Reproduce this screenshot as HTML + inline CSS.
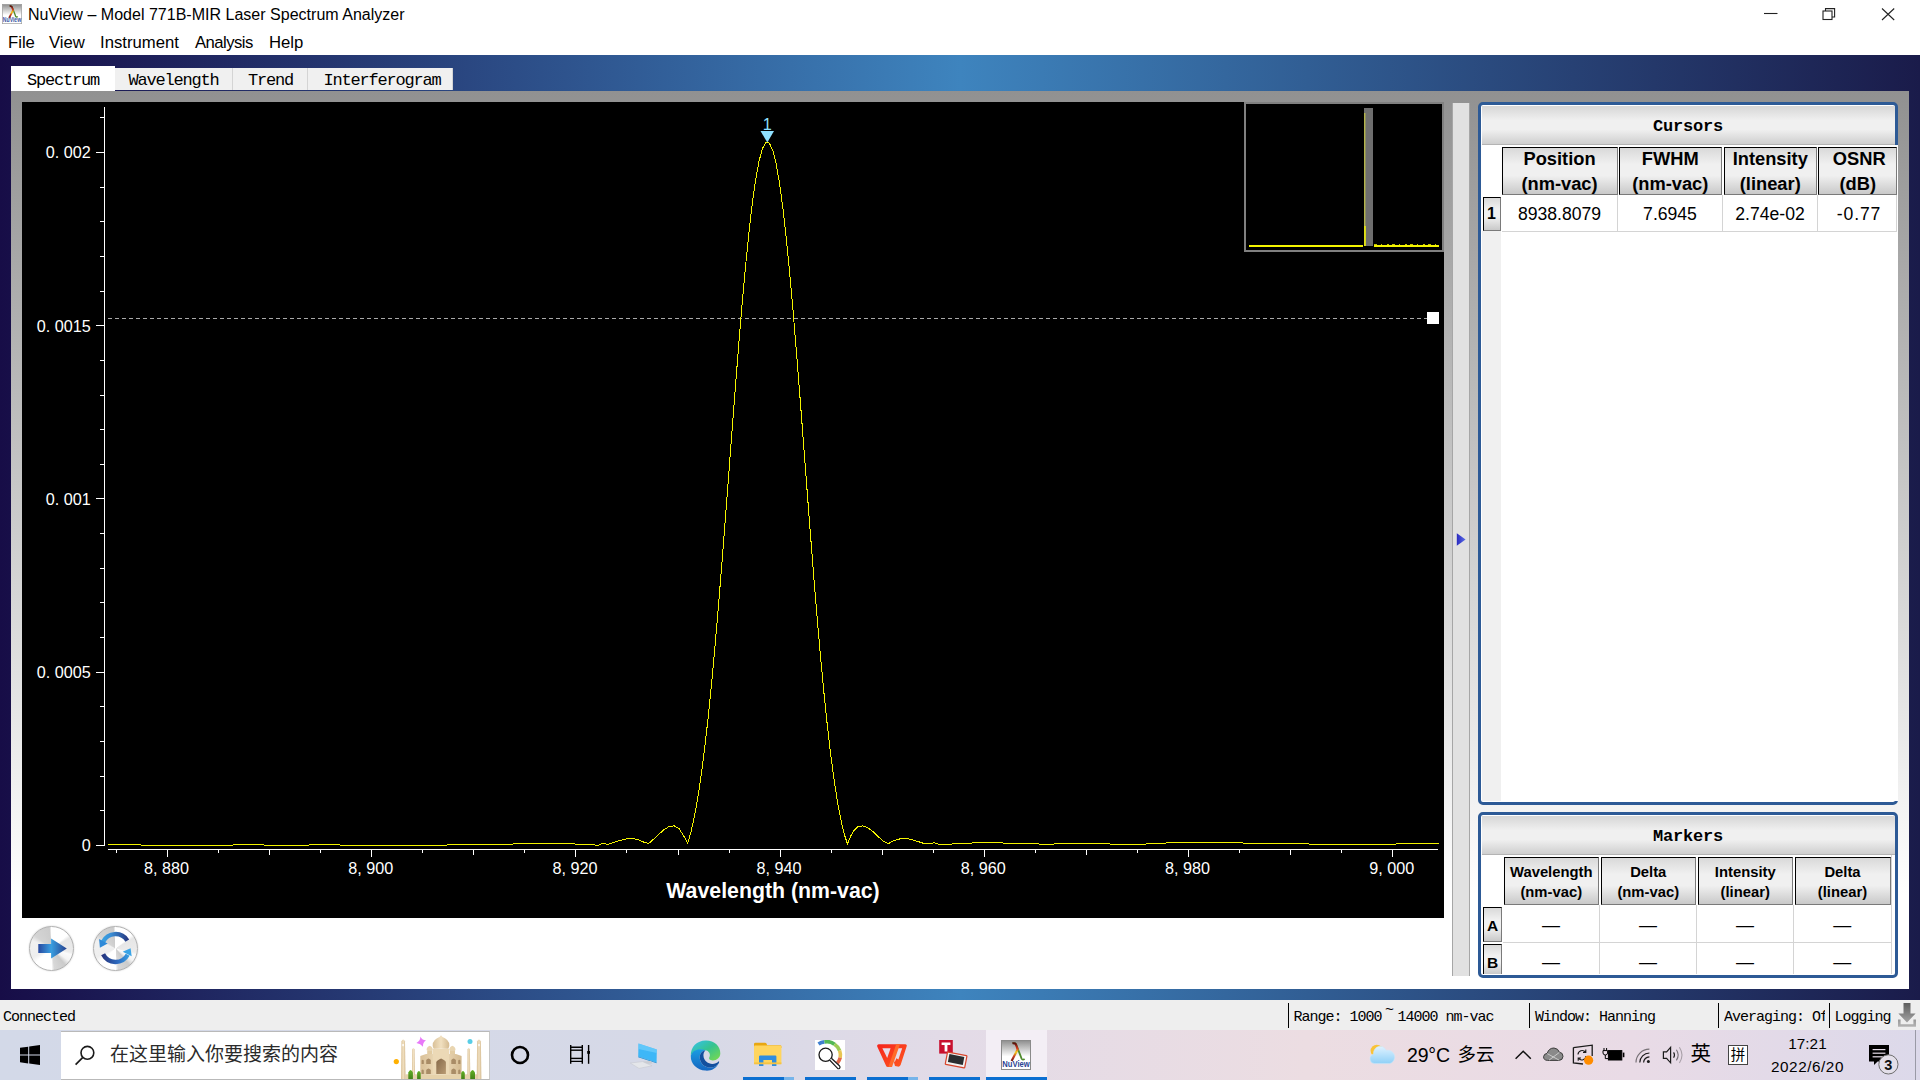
<!DOCTYPE html>
<html lang="zh-CN">
<head>
<meta charset="utf-8">
<title>NuView – Model 771B-MIR Laser Spectrum Analyzer</title>
<style>
html,body{margin:0;padding:0;width:1920px;height:1080px;overflow:hidden;background:#fff;}
body{position:relative;font-family:"Liberation Sans","Noto Sans CJK SC",sans-serif;color:#000;}
.abs{position:absolute;}
.mono{font-family:"Liberation Mono","Noto Sans CJK SC",monospace;}
.sans{font-family:"Liberation Sans","Noto Sans CJK SC",sans-serif;}
/* title + menu */
#titlebar{left:0;top:0;width:1920px;height:30px;background:#fff;}
#title{left:28px;top:4px;font-size:16.05px;line-height:20px;white-space:nowrap;}
#menubar{left:0;top:30px;width:1920px;height:25px;background:#fff;}
.mi{top:33px;font-size:16.7px;line-height:20px;white-space:nowrap;}
/* blue background */
#bluebg{left:0;top:55px;width:1920px;height:945px;background:linear-gradient(90deg,#170d47 0%,#3e84be 50%,#1a1b4a 100%);}
/* tabs */
.tab{top:68px;height:22px;background:#f0f0f0;font-size:17px;letter-spacing:-1.2px;line-height:26px;text-align:center;border-right:1px solid #d4d4d4;box-sizing:border-box;white-space:nowrap;}
#tab0{left:11px;top:66px;width:104px;height:25px;background:#fff;line-height:30px;border-right:none;}
/* pane */
#pane{left:11px;top:91px;width:1898px;height:898px;background:linear-gradient(180deg,#919191 0px,#ffffff 805px);}
/* splitter */
#split{left:1452px;top:103px;width:18px;height:873px;background:#e1e1e1;box-sizing:border-box;border-left:1px solid #a6a6a6;border-right:1px solid #a6a6a6;}
/* panels */
.panel{box-sizing:border-box;border:3.8px solid #2d5a96;border-radius:5px;background:#fff;overflow:hidden;}
.ptitle{left:0;top:0;height:40px;box-sizing:border-box;border-bottom:1px solid #b4b4b4;background:linear-gradient(180deg,#d6d6d6 0%,#f0f0f0 38%,#f0f0f0 62%,#cfcfcf 100%);text-align:center;font-weight:bold;font-size:17px;letter-spacing:-0.2px;line-height:40px;}
.hc{box-sizing:border-box;border-top:1.5px solid #000;border-left:1.5px solid #000;border-right:1.5px solid #7a7a7a;border-bottom:1.5px solid #7a7a7a;background:linear-gradient(180deg,#d9d9d9 0%,#f0f0f0 35%,#f0f0f0 60%,#c9c9c9 100%);font-weight:bold;text-align:center;overflow:hidden;white-space:nowrap;}
.dc{box-sizing:border-box;border-right:1px solid #d4d4d4;border-bottom:1px solid #d4d4d4;background:#fff;text-align:center;white-space:nowrap;}
.rb{width:45px;height:45px;border-radius:50%;box-sizing:border-box;border:1.5px solid #b2b2b2;box-shadow:0 0 1.5px #bdbdbd;background:conic-gradient(from 0deg,#ffffff 0deg,#ffffff 50deg,#e6e6e6 60deg,#ebebeb 100deg,#fbfbfb 108deg,#f4f4f4 125deg,#cbcbcb 140deg,#d8d8d8 172deg,#ffffff 180deg,#ffffff 228deg,#eeeeee 245deg,#f1f1f1 292deg,#d4d4d4 308deg,#cccccc 354deg,#ffffff 360deg);}
/* status bar */
#status{left:0;top:1000px;width:1920px;height:30px;background:#eeeeee;}
.st{top:1008px;font-size:15px;letter-spacing:-1px;line-height:20px;white-space:nowrap;}
.sep{top:1003px;width:1px;height:25px;background:#000;}
/* taskbar */
#taskbar{left:0;top:1030px;width:1920px;height:50px;background:linear-gradient(90deg,#d3d9e8 0%,#d6d9e7 35%,#e3dbe7 50%,#ecdde2 68%,#e9dbe6 85%,#dcd9ea 100%);}
.ul{top:1077px;height:3px;background:#0b6fd1;}
.ul2{top:1077px;height:3px;background:#76b4ea;}
</style>
</head>
<body>
<!-- ===== title bar ===== -->
<div id="titlebar" class="abs"></div>
<svg class="abs" style="left:2px;top:4px" width="20" height="20" viewBox="0 0 30 30">
<defs><linearGradient id="nv0" x1="0" y1="0" x2="0" y2="1"><stop offset="0" stop-color="#8e8e8e"/><stop offset=".55" stop-color="#ffffff"/><stop offset="1" stop-color="#ffffff"/></linearGradient>
<linearGradient id="lm0" x1="0" y1="0" x2="0" y2="1"><stop offset="0" stop-color="#5a1010"/><stop offset=".3" stop-color="#d83a1e"/><stop offset=".5" stop-color="#f5d21a"/><stop offset=".75" stop-color="#c43c22"/><stop offset="1" stop-color="#6c1a12"/></linearGradient></defs>
<rect x=".5" y=".5" width="29" height="29" fill="url(#nv0)" stroke="#9a9a9a"/>
<path d="M11.5,3.4 Q14.6,2 15.8,6 L20.6,18.6 Q21.6,20.6 23.6,18.8" fill="none" stroke="#4f8a2c" stroke-width="2"/>
<path d="M11.5,3.6 Q14.4,2.2 15.6,6.2 L16.6,9.4 L10.6,21" fill="none" stroke="url(#lm0)" stroke-width="2.6"/>
<text x="15" y="27.6" text-anchor="middle" font-family="'Liberation Sans',sans-serif" font-weight="bold" font-size="9.8" fill="#3a56a4" textLength="27.4" lengthAdjust="spacingAndGlyphs">NuView</text>
</svg>

<div id="title" class="abs">NuView – Model 771B-MIR Laser Spectrum Analyzer</div>
<svg class="abs" style="left:1750px;top:0px" width="170" height="30" viewBox="1750 0 170 30"><g fill="none" stroke="#222" stroke-width="1.1"><line x1="1764" y1="13.5" x2="1777.5" y2="13.5"/><rect x="1823" y="11" width="9" height="8.5"/><path d="M1825.5,11 V8.6 H1834.6 V17 H1832"/><path d="M1882,8.5 L1894.2,20 M1894.2,8.5 L1882,20"/></g></svg>

<!-- ===== menu ===== -->
<div id="menubar" class="abs"></div>
<div class="abs mi" style="left:8px">File</div>
<div class="abs mi" style="left:49px">View</div>
<div class="abs mi" style="left:100px">Instrument</div>
<div class="abs mi" style="left:195px;letter-spacing:-0.55px">Analysis</div>
<div class="abs mi" style="left:269px">Help</div>
<!-- ===== blue background ===== -->
<div id="bluebg" class="abs"></div>
<!-- ===== tabs ===== -->
<div id="tab0" class="abs tab mono">Spectrum</div>
<div class="abs tab mono" style="left:115px;width:118px">Wavelength</div>
<div class="abs tab mono" style="left:233px;width:75px;text-indent:1px">Trend</div>
<div class="abs tab mono" style="left:308px;width:145px;text-indent:4px">Interferogram</div>
<!-- ===== pane ===== -->
<div id="pane" class="abs"></div>
<svg class="abs" style="left:22px;top:102px" width="1422" height="816" viewBox="22 102 1422 816">
<rect x="22" y="102" width="1422" height="816" fill="#000"/>
<g stroke="#fff" stroke-width="1" shape-rendering="crispEdges">
<line x1="104.5" y1="107" x2="104.5" y2="846"/>
<line x1="108" y1="849.5" x2="1438" y2="849.5"/>
<line x1="100" y1="117.5" x2="104" y2="117.5"/><line x1="100" y1="152.5" x2="104" y2="152.5"/><line x1="100" y1="187.5" x2="104" y2="187.5"/><line x1="100" y1="221.5" x2="104" y2="221.5"/><line x1="100" y1="256.5" x2="104" y2="256.5"/><line x1="100" y1="291.5" x2="104" y2="291.5"/><line x1="100" y1="325.5" x2="104" y2="325.5"/><line x1="100" y1="360.5" x2="104" y2="360.5"/><line x1="100" y1="395.5" x2="104" y2="395.5"/><line x1="100" y1="429.5" x2="104" y2="429.5"/><line x1="100" y1="464.5" x2="104" y2="464.5"/><line x1="100" y1="498.5" x2="104" y2="498.5"/><line x1="100" y1="533.5" x2="104" y2="533.5"/><line x1="100" y1="568.5" x2="104" y2="568.5"/><line x1="100" y1="602.5" x2="104" y2="602.5"/><line x1="100" y1="637.5" x2="104" y2="637.5"/><line x1="100" y1="672.5" x2="104" y2="672.5"/><line x1="100" y1="706.5" x2="104" y2="706.5"/><line x1="100" y1="741.5" x2="104" y2="741.5"/><line x1="100" y1="776.5" x2="104" y2="776.5"/><line x1="100" y1="810.5" x2="104" y2="810.5"/><line x1="100" y1="845.5" x2="104" y2="845.5"/><line x1="96" y1="152.5" x2="104" y2="152.5"/><line x1="96" y1="325.5" x2="104" y2="325.5"/><line x1="96" y1="498.5" x2="104" y2="498.5"/><line x1="96" y1="672.5" x2="104" y2="672.5"/><line x1="96" y1="845.5" x2="104" y2="845.5"/>
<line x1="116.5" y1="849" x2="116.5" y2="853.0"/><line x1="167.5" y1="849" x2="167.5" y2="857.0"/><line x1="218.5" y1="849" x2="218.5" y2="853.0"/><line x1="269.5" y1="849" x2="269.5" y2="854.5"/><line x1="320.5" y1="849" x2="320.5" y2="853.0"/><line x1="371.5" y1="849" x2="371.5" y2="857.0"/><line x1="422.5" y1="849" x2="422.5" y2="853.0"/><line x1="473.5" y1="849" x2="473.5" y2="854.5"/><line x1="524.5" y1="849" x2="524.5" y2="853.0"/><line x1="575.5" y1="849" x2="575.5" y2="857.0"/><line x1="626.5" y1="849" x2="626.5" y2="853.0"/><line x1="678.5" y1="849" x2="678.5" y2="854.5"/><line x1="729.5" y1="849" x2="729.5" y2="853.0"/><line x1="780.5" y1="849" x2="780.5" y2="857.0"/><line x1="831.5" y1="849" x2="831.5" y2="853.0"/><line x1="882.5" y1="849" x2="882.5" y2="854.5"/><line x1="933.5" y1="849" x2="933.5" y2="853.0"/><line x1="984.5" y1="849" x2="984.5" y2="857.0"/><line x1="1035.5" y1="849" x2="1035.5" y2="853.0"/><line x1="1086.5" y1="849" x2="1086.5" y2="854.5"/><line x1="1137.5" y1="849" x2="1137.5" y2="853.0"/><line x1="1188.5" y1="849" x2="1188.5" y2="857.0"/><line x1="1239.5" y1="849" x2="1239.5" y2="853.0"/><line x1="1290.5" y1="849" x2="1290.5" y2="854.5"/><line x1="1341.5" y1="849" x2="1341.5" y2="853.0"/><line x1="1392.5" y1="849" x2="1392.5" y2="857.0"/>
</g>
<line x1="108" y1="318.5" x2="1427" y2="318.5" stroke="#a8a8a8" stroke-width="1" stroke-dasharray="4 3" shape-rendering="crispEdges"/>
<rect x="1427" y="312" width="12" height="12" fill="#fff"/>
<g fill="#fff" font-family="'Liberation Sans',sans-serif" font-size="16.2">
<text x="90.8" y="158.4" text-anchor="end">0.<tspan dx="4.5">0</tspan>02</text><text x="90.8" y="331.6" text-anchor="end">0.<tspan dx="4.5">0</tspan>015</text><text x="90.8" y="504.8" text-anchor="end">0.<tspan dx="4.5">0</tspan>01</text><text x="90.8" y="678.0" text-anchor="end">0.<tspan dx="4.5">0</tspan>005</text><text x="90.8" y="851.2" text-anchor="end">0</text>
<text x="166.5" y="873.6" text-anchor="middle">8,<tspan dx="4.5">8</tspan>80</text><text x="370.7" y="873.6" text-anchor="middle">8,<tspan dx="4.5">9</tspan>00</text><text x="574.9" y="873.6" text-anchor="middle">8,<tspan dx="4.5">9</tspan>20</text><text x="779.1" y="873.6" text-anchor="middle">8,<tspan dx="4.5">9</tspan>40</text><text x="983.3" y="873.6" text-anchor="middle">8,<tspan dx="4.5">9</tspan>60</text><text x="1187.5" y="873.6" text-anchor="middle">8,<tspan dx="4.5">9</tspan>80</text><text x="1391.7" y="873.6" text-anchor="middle">9,<tspan dx="4.5">0</tspan>00</text>
</g>
<text x="773" y="897.5" text-anchor="middle" fill="#fff" font-family="'Liberation Sans',sans-serif" font-weight="bold" font-size="21.3">Wavelength (nm-vac)</text>
<polyline points="108.0,844.5 113.1,844.5 118.2,844.5 123.3,844.5 128.4,844.5 133.5,844.5 138.6,844.5 143.7,845.5 148.8,845.5 153.9,845.5 159.0,845.5 164.1,845.5 169.2,845.5 174.3,845.5 179.4,845.5 184.5,845.5 189.6,845.5 194.7,845.5 199.8,845.5 204.9,845.5 210.0,845.5 215.1,845.5 220.2,845.5 225.3,845.5 230.4,845.5 235.5,844.5 240.6,844.5 245.7,844.5 250.8,844.5 255.9,844.5 261.0,844.5 266.1,845.5 271.2,845.5 276.3,845.5 281.4,845.5 286.5,845.5 291.6,845.5 296.7,845.5 301.8,845.5 306.9,845.5 312.0,844.5 317.1,844.5 322.2,844.5 327.3,844.5 332.4,844.5 337.5,844.5 342.6,845.5 347.7,845.5 352.8,845.5 357.9,845.5 363.0,845.5 368.1,845.5 373.2,845.5 378.3,845.5 383.4,845.5 388.5,845.5 393.6,845.5 398.7,845.5 403.8,845.5 408.9,845.5 414.0,845.5 419.1,845.5 424.2,845.5 429.3,845.5 434.4,845.5 439.5,845.5 444.6,845.5 449.7,844.5 454.8,844.5 459.9,844.5 465.0,844.5 470.1,844.5 475.2,844.5 480.3,844.5 485.4,844.5 490.5,844.5 495.6,844.5 500.7,844.5 505.8,844.5 510.9,844.5 516.0,843.5 521.1,843.5 526.2,843.5 531.3,843.5 536.4,843.5 541.5,843.5 546.6,843.5 551.7,843.5 556.8,843.5 561.9,843.5 567.0,843.5 572.1,843.5 577.2,844.5 582.3,844.5 587.4,844.5 592.5,844.5 597.6,845.5 602.7,843.3 607.8,844.4 612.9,842.7 618.0,841.0 623.1,839.6 628.2,838.7 633.3,838.7 638.4,839.7 643.5,842.0 648.6,843.5 653.7,839.1 658.8,834.3 663.9,829.8 669.0,826.6 674.1,825.8 679.2,828.8 684.3,836.9 687.7,843.3 691.1,831.4 694.5,816.0 697.9,797.1 701.3,774.4 704.7,748.0 708.1,717.8 711.5,684.2 714.9,647.3 718.3,607.7 721.7,565.7 725.1,522.1 728.5,477.4 731.9,432.5 735.3,388.1 738.7,345.1 742.1,304.4 745.5,266.7 748.9,232.8 752.3,203.4 755.7,179.3 759.1,160.8 762.5,148.5 765.9,142.6 767.3,142.0 769.3,143.1 772.7,150.2 776.1,163.7 779.5,183.1 782.9,208.3 786.3,238.4 789.7,273.1 793.1,311.4 796.5,352.6 799.9,395.9 803.3,440.4 806.7,485.3 810.1,529.9 813.5,573.3 816.9,614.9 820.3,654.1 823.7,690.4 827.1,723.4 830.5,752.9 833.9,778.7 837.3,800.7 840.7,819.0 844.1,833.7 847.5,843.9 850.9,835.6 854.3,830.1 857.7,826.9 862.8,825.8 867.9,827.8 873.0,831.7 878.1,836.5 883.2,841.2 888.3,843.8 893.4,840.8 898.5,839.1 903.6,838.6 908.7,839.0 913.8,840.2 918.9,841.8 924.0,843.5 929.1,844.0 934.2,842.8 939.3,844.5 944.4,844.5 949.5,844.5 954.6,843.5 959.7,843.5 964.8,843.5 969.9,843.5 975.0,842.5 980.1,842.5 985.2,842.5 990.3,842.5 995.4,842.5 1000.5,842.5 1005.6,843.5 1010.7,843.5 1015.8,843.5 1020.9,843.5 1026.0,843.5 1031.1,843.5 1036.2,843.5 1041.3,844.5 1046.4,844.5 1051.5,844.5 1056.6,843.5 1061.7,843.5 1066.8,843.5 1071.9,843.5 1077.0,843.5 1082.1,843.5 1087.2,843.5 1092.3,843.5 1097.4,843.5 1102.5,843.5 1107.6,843.5 1112.7,844.5 1117.8,844.5 1122.9,844.5 1128.0,844.5 1133.1,844.5 1138.2,844.5 1143.3,844.5 1148.4,843.5 1153.5,843.5 1158.6,843.5 1163.7,843.5 1168.8,842.5 1173.9,842.5 1179.0,842.5 1184.1,842.5 1189.2,842.5 1194.3,842.5 1199.4,842.5 1204.5,842.5 1209.6,842.5 1214.7,842.5 1219.8,842.5 1224.9,842.5 1230.0,842.5 1235.1,842.5 1240.2,842.5 1245.3,843.5 1250.4,843.5 1255.5,843.5 1260.6,843.5 1265.7,843.5 1270.8,843.5 1275.9,843.5 1281.0,843.5 1286.1,843.5 1291.2,843.5 1296.3,843.5 1301.4,843.5 1306.5,843.5 1311.6,844.5 1316.7,844.5 1321.8,844.5 1326.9,844.5 1332.0,844.5 1337.1,844.5 1342.2,844.5 1347.3,844.5 1352.4,844.5 1357.5,844.5 1362.6,844.5 1367.7,844.5 1372.8,844.5 1377.9,844.5 1383.0,844.5 1388.1,844.5 1393.2,844.5 1398.3,843.5 1403.4,843.5 1408.5,843.5 1413.6,843.5 1418.7,843.5 1423.8,843.5 1428.9,843.5 1434.0,843.5 1438.5,843.5" fill="none" stroke="#f4f400" stroke-width="1" shape-rendering="crispEdges"/>
<polygon points="760.5,131 774,131 767.3,142.5" fill="#8fe0ff"/>
<text x="767.3" y="130" text-anchor="middle" fill="#8fe0ff" font-family="'Liberation Sans',sans-serif" font-size="16.2">1</text>
<!-- inset overview -->
<rect x="1245" y="103" width="198" height="148" fill="#000" stroke="#808080" stroke-width="2"/>
<rect x="1364" y="108" width="9" height="138" fill="#6e6e6e"/>
<g stroke="#f4f400" stroke-width="2" shape-rendering="crispEdges" fill="none">
<line x1="1249" y1="245.5" x2="1363" y2="245.5"/>
<line x1="1374" y1="245.5" x2="1439" y2="245.5"/>
<line x1="1374" y1="244.3" x2="1439" y2="244.3" stroke-width="0.8" stroke-dasharray="3 4 1 5 2 3"/>
</g>
<line x1="1364.8" y1="113" x2="1364.8" y2="246" stroke="#d2d23c" stroke-width="1"/>
<line x1="1365" y1="226" x2="1365" y2="246" stroke="#f4f400" stroke-width="1.4"/>
</svg>
<div id="split" class="abs"></div>
<svg class="abs" style="left:1456px;top:533px" width="10" height="13" viewBox="0 0 10 13"><defs><linearGradient id="tri" x1="0" y1="0" x2="1" y2="0"><stop offset="0" stop-color="#2a2ac0"/><stop offset="1" stop-color="#5b6ee6"/></linearGradient></defs><polygon points="0.8,0.3 9.6,6.5 0.8,12.7" fill="url(#tri)"/></svg>
<!-- ===== Cursors panel ===== -->
<div class="abs panel" style="left:1478px;top:102px;width:420px;height:702.8px"></div>
<div class="abs" style="left:1894px;top:145px;width:4px;height:656px;background:#fff"></div>
<div class="abs ptitle mono" style="left:1481.5px;top:105.5px;width:413px;height:39.5px;line-height:41.5px">Cursors</div>
<div class="abs" style="left:1481.5px;top:231px;width:19.7px;height:570px;background:#f0f0f0"></div>
<div class="abs hc" style="left:1501.5px;top:146.5px;width:116px;height:48px;font-size:18.3px;line-height:24.7px"><div style="margin-top:-0.7px">Position<br>(nm-vac)</div></div>
<div class="abs hc" style="left:1618.5px;top:146.5px;width:103.5px;height:48px;font-size:18.3px;line-height:24.7px"><div style="margin-top:-0.7px">FWHM<br>(nm-vac)</div></div>
<div class="abs hc" style="left:1723.5px;top:146.5px;width:93.5px;height:48px;font-size:18.3px;line-height:24.7px"><div style="margin-top:-0.7px">Intensity<br>(linear)</div></div>
<div class="abs hc" style="left:1818px;top:146.5px;width:78.5px;height:48px;font-size:18.3px;line-height:24.7px"><div style="margin-top:-0.7px;padding-left:1px"><span style="position:relative;left:1.5px">OSNR</span><br>(dB)</div></div>
<div class="abs hc" style="left:1482.5px;top:196.5px;width:18px;height:34.5px;font-size:16px;line-height:31px">1</div>
<div class="abs dc" style="left:1502px;top:195px;width:116px;height:36.5px;font-size:17.6px;line-height:38px">8938.8079</div>
<div class="abs dc" style="left:1618px;top:195px;width:105px;height:36.5px;font-size:17.6px;line-height:38px">7.6945</div>
<div class="abs dc" style="left:1723px;top:195px;width:95px;height:36.5px;font-size:17.6px;line-height:38px">2.74e-02</div>
<div class="abs dc" style="left:1818px;top:195px;width:79px;height:36.5px;font-size:17.6px;line-height:38px;letter-spacing:0.9px;text-indent:4px">-0.77</div>

<!-- ===== Markers panel ===== -->
<div class="abs panel" style="left:1478px;top:812px;width:420px;height:165.5px"></div>
<div class="abs ptitle mono" style="left:1481.5px;top:815.5px;width:413px;height:39.5px;line-height:41.5px">Markers</div>
<div class="abs" style="left:1891px;top:855px;width:1px;height:119px;background:#d4d4d4"></div>
<div class="abs hc" style="left:1503.5px;top:857px;width:95.5px;height:47.5px;font-size:14.8px;line-height:20px"><div style="margin-top:3.5px">Wavelength<br>(nm-vac)</div></div>
<div class="abs hc" style="left:1600.5px;top:857px;width:95.5px;height:47.5px;font-size:14.8px;line-height:20px"><div style="margin-top:3.5px">Delta<br>(nm-vac)</div></div>
<div class="abs hc" style="left:1697.5px;top:857px;width:95.5px;height:47.5px;font-size:14.8px;line-height:20px"><div style="margin-top:3.5px">Intensity<br>(linear)</div></div>
<div class="abs hc" style="left:1794.5px;top:857px;width:96px;height:47.5px;font-size:14.8px;line-height:20px"><div style="margin-top:3.5px">Delta<br>(linear)</div></div>
<div class="abs hc" style="left:1483px;top:907px;width:19px;height:34.5px;font-size:15.5px;line-height:35px">A</div>
<div class="abs hc" style="left:1483px;top:944px;width:19px;height:30px;font-size:15.5px;line-height:35px;border-bottom:none">B</div>
<div class="abs dc" style="left:1503px;top:904.5px;width:97px;height:38.5px;font-size:18px;line-height:40px">—</div>
<div class="abs dc" style="left:1600px;top:904.5px;width:97px;height:38.5px;font-size:18px;line-height:40px">—</div>
<div class="abs dc" style="left:1697px;top:904.5px;width:97px;height:38.5px;font-size:18px;line-height:40px">—</div>
<div class="abs dc" style="left:1794px;top:904.5px;width:97.5px;height:38.5px;font-size:18px;line-height:40px">—</div>
<div class="abs dc" style="left:1503px;top:943px;width:97px;height:31px;font-size:18px;line-height:38px;border-bottom:none;overflow:hidden">—</div>
<div class="abs dc" style="left:1600px;top:943px;width:97px;height:31px;font-size:18px;line-height:38px;border-bottom:none;overflow:hidden">—</div>
<div class="abs dc" style="left:1697px;top:943px;width:97px;height:31px;font-size:18px;line-height:38px;border-bottom:none;overflow:hidden">—</div>
<div class="abs dc" style="left:1794px;top:943px;width:97.5px;height:31px;font-size:18px;line-height:38px;border-bottom:none;overflow:hidden">—</div>

<!-- ===== round buttons ===== -->
<div class="abs rb" style="left:29px;top:925.5px"></div>
<div class="abs rb" style="left:93px;top:926px"></div>
<svg class="abs" style="left:29px;top:925.5px" width="45" height="45" viewBox="-22.5 -22.5 45 45">
<defs><linearGradient id="ar1" x1="0" y1="0" x2="1" y2="0"><stop offset="0" stop-color="#2748a0"/><stop offset="0.45" stop-color="#3a9fe0"/><stop offset="1" stop-color="#27418f"/></linearGradient></defs>
<polygon points="-13.2,-4.4 -0.4,-4.4 -0.4,-9.9 15.3,0 -0.4,9.9 -0.4,4.4 -13.2,4.4" fill="url(#ar1)"/>
</svg>
<svg class="abs" style="left:93px;top:926px" width="45" height="45" viewBox="-22.5 -22.5 45 45">
<defs>
<linearGradient id="ar2" gradientUnits="userSpaceOnUse" x1="-15" y1="0" x2="14" y2="0"><stop offset="0" stop-color="#39a6e6"/><stop offset="0.35" stop-color="#3a8fd6"/><stop offset="1" stop-color="#25317a"/></linearGradient>
<linearGradient id="ar3" gradientUnits="userSpaceOnUse" x1="-14" y1="0" x2="15" y2="0"><stop offset="0" stop-color="#25317a"/><stop offset="0.6" stop-color="#2f6fc4"/><stop offset="1" stop-color="#39a6e6"/></linearGradient>
</defs>
<path d="M11.8,-7.9 A13.9,13.9 0 0 0 -12.4,-6.8" fill="none" stroke="url(#ar2)" stroke-width="4.4"/>
<polygon points="-15.6,-0.8 -16.4,-9.4 -7.8,-5.0" fill="#2f8ad8"/>
<path d="M-12.4,5.8 A13.9,13.9 0 0 0 12.2,6.2" fill="none" stroke="url(#ar3)" stroke-width="4.4"/>
<polygon points="15.1,-0.2 7.2,3.2 16.2,7.8" fill="#3aa4e6"/>
</svg>

<!-- ===== status bar ===== -->
<div id="status" class="abs"></div>
<div class="abs st mono" style="left:3px">Connected</div>
<div class="abs sep" style="left:1288px"></div>
<div class="abs st mono" style="left:1293.5px">Range: 1000<span style="display:inline-block;width:16px;text-align:center;position:relative;top:-7px;letter-spacing:0">~</span>14000 nm-vac</div>
<div class="abs sep" style="left:1529px"></div>
<div class="abs st mono" style="left:1535px">Window: Hanning</div>
<div class="abs sep" style="left:1718px"></div>
<div class="abs st mono" style="left:1724px;width:100.5px;overflow:hidden">Averaging: Off</div>
<div class="abs sep" style="left:1829px"></div>
<div class="abs st mono" style="left:1834.5px">Logging</div>
<svg class="abs" style="left:1897px;top:1002px" width="20" height="26" viewBox="0 0 20 26"><defs><linearGradient id="dl" x1="0" y1="0" x2="0" y2="1"><stop offset="0" stop-color="#5c5c5c"/><stop offset="1" stop-color="#b4b4b4"/></linearGradient></defs><path d="M6.5,1 H13.5 V11.5 H18.6 L10,20.6 L1.4,11.5 H6.5 Z M1,17.5 H3.6 V22.2 H16.4 V17.5 H19 V24.8 H1 Z" fill="url(#dl)"/></svg>

<!-- ===== taskbar ===== -->
<div id="taskbar" class="abs"></div>
<!--TB0--><!-- start button -->
<svg class="abs" style="left:20px;top:1045px" width="20" height="20" viewBox="0 0 20 20"><path d="M0,2.8 L8.2,1.7 V9.6 H0 Z M9.2,1.55 L20,0 V9.6 H9.2 Z M0,10.5 H8.2 V18.4 L0,17.3 Z M9.2,10.5 H20 V20 L9.2,18.5 Z" fill="#000"/></svg>
<!-- search box -->
<div class="abs" style="left:60.5px;top:1030.5px;width:429.3px;height:49px;background:#fff;box-sizing:border-box;border-top:1px solid #b9b9b9;border-bottom:1px solid #b9b9b9;border-right:1px solid #c8c8c8"></div>
<svg class="abs" style="left:72px;top:1042px" width="28" height="26" viewBox="72 1042 28 26"><circle cx="87.4" cy="1052.8" r="6.4" fill="none" stroke="#1a1a1a" stroke-width="1.6"/><line x1="82.6" y1="1057.6" x2="75.6" y2="1064.6" stroke="#1a1a1a" stroke-width="1.7"/></svg>
<div class="abs sans" style="left:110px;top:1042px;font-size:19px;line-height:26px;color:#2b2b2b;white-space:nowrap">在这里输入你要搜索的内容</div>
<!-- Taj Mahal doodle -->
<svg class="abs" style="left:390px;top:1031px" width="99" height="48" viewBox="390 1031 99 48">
<defs>
<linearGradient id="tj" x1="0" y1="0" x2="1" y2="0"><stop offset="0" stop-color="#d9c097"/><stop offset="0.5" stop-color="#f1e0c0"/><stop offset="1" stop-color="#d4ba90"/></linearGradient>
<linearGradient id="tja" x1="0" y1="0" x2="1" y2="1"><stop offset="0" stop-color="#86694a"/><stop offset="1" stop-color="#b89a72"/></linearGradient>
<linearGradient id="tg" x1="0" y1="0" x2="0" y2="1"><stop offset="0" stop-color="#63b024"/><stop offset="1" stop-color="#3f7d18"/></linearGradient>
</defs>
<circle cx="396.3" cy="1061.6" r="2.6" fill="#ffb000"/>
<circle cx="470" cy="1041.6" r="2.5" fill="#58cde6"/>
<path d="M420.5,1036.5 Q421.6,1040 426,1040.2 Q422.6,1042.6 423,1046.8 Q420.6,1043.6 416.4,1043 Q420.2,1041 420.5,1036.5 Z" fill="#e879f9"/>
<!-- base -->
<rect x="405.5" y="1074.3" width="71.5" height="6" fill="#e6d2ab"/>
<!-- tall minarets -->
<path d="M401,1080 L401.4,1041.5 Q403.2,1037.5 405,1041.5 L405.6,1080 Z" fill="url(#tj)"/>
<path d="M476.7,1080 L477.1,1041.5 Q479,1037.5 480.9,1041.5 L481.4,1080 Z" fill="url(#tj)"/>
<rect x="402.2" y="1044" width="1.8" height="2.2" fill="#fff" opacity=".8"/><rect x="478.1" y="1044" width="1.8" height="2.2" fill="#fff" opacity=".8"/>
<!-- small minarets -->
<path d="M412,1075 L412.2,1049.5 Q413.4,1046.5 414.6,1049.5 L415,1075 Z" fill="url(#tj)"/>
<path d="M467.3,1075 L467.5,1049.5 Q468.7,1046.5 469.9,1049.5 L470.3,1075 Z" fill="url(#tj)"/>
<!-- building -->
<path d="M420.3,1074.4 V1056 L426,1054 H456 L461.6,1056 V1074.4 Z" fill="url(#tj)"/>
<rect x="432.8" y="1049" width="16.3" height="25.4" fill="#ecd9b6"/>
<!-- side domes -->
<path d="M426.6,1050.2 Q426.4,1047 429.7,1045.8 Q433,1047 432.8,1050.2 Z" fill="#e9d5b0"/>
<path d="M449.3,1050.2 Q449.1,1047 452.4,1045.8 Q455.7,1047 455.5,1050.2 Z" fill="#e9d5b0"/>
<rect x="427.2" y="1050.2" width="5.2" height="3.8" fill="#e2cca3"/><rect x="449.8" y="1050.2" width="5.2" height="3.8" fill="#e2cca3"/>
<!-- main dome -->
<path d="M433.6,1048.8 Q430.6,1042 437,1038.2 Q440,1037 441,1035.2 Q442,1037 445,1038.2 Q451.4,1042 448.4,1048.8 Z" fill="url(#tj)"/>
<!-- arches -->
<path d="M436.3,1074 V1062.5 Q436.6,1060.4 441.1,1058.6 Q445.6,1060.4 445.9,1062.5 V1074 Z" fill="url(#tja)"/>
<g fill="#a98c66">
<path d="M421.6,1064 V1060.6 Q422.7,1058.8 423.8,1060.6 V1064 Z"/><path d="M426.2,1064 V1060 Q428.5,1057 430.8,1060 V1064 Z"/>
<path d="M451.3,1064 V1060 Q453.6,1057 455.9,1060 V1064 Z"/><path d="M458.2,1064 V1060.6 Q459.3,1058.8 460.4,1060.6 V1064 Z"/>
<path d="M421.6,1074 V1070.4 Q422.7,1068.6 423.8,1070.4 V1074 Z"/><path d="M426.2,1074 V1070 Q428.5,1067 430.8,1070 V1074 Z"/>
<path d="M451.3,1074 V1070 Q453.6,1067 455.9,1070 V1074 Z"/><path d="M458.2,1074 V1070.4 Q459.3,1068.6 460.4,1070.4 V1074 Z"/>
</g>
<!-- trees -->
<path d="M408.3,1080 V1072.5 Q410.6,1067.5 412.9,1072.5 V1080 Z" fill="url(#tg)"/>
<path d="M417.1,1080 V1073 Q418.9,1069 420.7,1073 V1080 Z" fill="url(#tg)"/>
<path d="M461.2,1080 V1073 Q463,1069 464.8,1073 V1080 Z" fill="url(#tg)"/>
<path d="M470.2,1080 V1072.5 Q472.6,1067.5 475,1072.5 V1080 Z" fill="url(#tg)"/>
</svg>
<!-- cortana -->
<svg class="abs" style="left:508px;top:1043px" width="24" height="24" viewBox="0 0 24 24"><circle cx="12" cy="12" r="8" fill="none" stroke="#000" stroke-width="2.6"/></svg>
<!-- task view -->
<svg class="abs" style="left:568px;top:1043px" width="24" height="24" viewBox="568 1043 24 24"><g fill="none" stroke="#000" stroke-width="1.4"><rect x="570.7" y="1050.2" width="11.6" height="8.2"/><path d="M570.7,1050.2 V1045 M582.3,1050.2 V1045 M570.7,1047.3 H582.3 M570.7,1058.4 V1063.7 M582.3,1058.4 V1063.7 M570.7,1061.4 H582.3"/><line x1="588.6" y1="1045" x2="588.6" y2="1063.8"/></g><rect x="587.2" y="1051" width="2.8" height="2.8" fill="#000"/></svg>
<!-- this PC -->
<svg class="abs" style="left:628px;top:1041px" width="32" height="30" viewBox="628 1041 32 30">
<polygon points="638.5,1043.6 656.8,1049.6 656.6,1062.4 638.2,1056.4" fill="#3db7f7"/>
<polygon points="638.5,1043.6 656.8,1049.6 656.75,1053 638.4,1049" fill="#6fcdfb" opacity=".7"/>
<polygon points="638.2,1056.4 656.6,1062.4 656.6,1063.2 638.2,1057.2" fill="#1d8fd4"/>
<polygon points="643,1061.5 651,1061 652.5,1063.4 645,1064" fill="#c9ccd2"/>
<polygon points="630.2,1063 642.6,1061.6 652,1065.8 639,1068.4" fill="#e4e6ea" stroke="#c2c5cc" stroke-width=".5"/>
</svg>
<!-- edge -->
<svg class="abs" style="left:689px;top:1039px" width="33" height="33" viewBox="0 0 33 33">
<defs>
<linearGradient id="eg1" x1="0" y1="0" x2="1" y2="1"><stop offset="0" stop-color="#35c1f1"/><stop offset=".5" stop-color="#36c38f"/><stop offset="1" stop-color="#7ddb4a"/></linearGradient>
<linearGradient id="eg2" x1="0" y1="0" x2="0" y2="1"><stop offset="0" stop-color="#1b9de2"/><stop offset="1" stop-color="#1565c0"/></linearGradient>
</defs>
<path d="M1.8,17 C1.5,8 8,1.5 17,1.6 C25.5,1.7 31.5,7.5 31.3,14.5 C31.2,19 27.5,21.6 23.5,21.4 C20.8,21.3 19.6,20 20.2,18.6 C21.6,16.6 21,13 17.5,11.6 C10,9 3.5,12 1.8,17 Z" fill="url(#eg1)"/>
<path d="M1.8,17 C3.5,10.5 11,9 16.5,11.3 C12.5,12 10.3,15.5 10.8,19.5 C11.5,25 16.5,29.5 23,28.4 C25.8,27.9 28.2,26.3 29.6,24.4 C27.3,29.2 22.3,32 16.6,31.6 C8,31 1.5,25 1.8,17 Z" fill="url(#eg2)"/>
<path d="M10.8,19.5 C10.3,15.5 12.5,12 16.5,11.3 C13.5,14 13.8,19.5 17.5,22.8 C21,25.8 26.5,25.6 29.8,22.2 C30.4,22.6 30.2,23.4 29.6,24.4 C28.2,26.3 25.8,27.9 23,28.4 C16.5,29.5 11.5,25 10.8,19.5 Z" fill="#134f9e"/>
</svg>
<!-- explorer -->
<svg class="abs" style="left:752px;top:1041px" width="32" height="27" viewBox="752 1041 32 27">
<path d="M754,1044.2 Q754,1042.8 755.4,1042.8 H765 Q766.2,1042.8 766.6,1043.8 L767.2,1045.2 H780 Q781.4,1045.2 781.4,1046.6 V1048 H754 Z" fill="#e8a712"/>
<rect x="754" y="1045.6" width="27.4" height="18.6" rx="1" fill="#ffd55e"/>
<path d="M759,1066 V1056.6 Q759,1055.4 760.2,1055.4 H775.2 Q776.4,1055.4 776.4,1056.6 V1066 H772 V1060 H763.4 V1066 Z" fill="#2f8de0"/>
<rect x="754" y="1062.4" width="27.4" height="1.8" fill="#f5c343"/>
</svg>
<div class="abs ul" style="left:743px;width:41px"></div><div class="abs ul2" style="left:784px;width:10px"></div>
<!-- search tool -->
<svg class="abs" style="left:815px;top:1040px" width="30" height="30" viewBox="0 0 30 30">
<rect width="30" height="30" fill="#fff"/>
<g fill="none" stroke-width="3.6">
<path d="M3.5,4 A12.5,12.5 0 0 1 9.5,1.9" stroke="#3f7fd0"/>
<path d="M9.5,1.9 A12.5,12.5 0 0 1 19.5,4.2" stroke="#53b956"/>
<path d="M19.5,4.2 A12.5,12.5 0 0 1 24.6,10.6" stroke="#9ccb55"/>
<path d="M24.6,10.6 A12.5,12.5 0 0 1 25.2,17.6" stroke="#e8c552"/>
<path d="M25.2,17.6 A12.5,12.5 0 0 1 22.4,23" stroke="#e2684a"/>
</g>
<circle cx="10.6" cy="14.8" r="6.6" fill="#fff" stroke="#1a1a1a" stroke-width="1.3"/>
<path d="M14.6,20 L22.6,28.4 Q24.2,29.4 25,27.6 Q25.2,26.6 24.4,25.8 L16.4,18.2" fill="#fff" stroke="#1a1a1a" stroke-width="1.2"/>
</svg>
<div class="abs ul" style="left:805px;width:51px"></div>
<!-- WPS -->
<svg class="abs" style="left:876px;top:1043px" width="32" height="25" viewBox="0 0 32 25">
<defs><linearGradient id="wp" x1="0" y1="0" x2="1" y2="1"><stop offset="0" stop-color="#f5231c"/><stop offset="1" stop-color="#ff5a1f"/></linearGradient></defs>
<path d="M2.6,1.2 H29.2 Q31.4,1.4 30.6,3.6 L24.6,22 Q23.6,24 21.6,23.6 L19,23 L17.4,17.4 L15,23.4 Q13.2,24.4 10.4,23.4 L1.2,3.6 Q0.6,1.4 2.6,1.2 Z" fill="url(#wp)"/>
<path d="M6.4,5.2 H14.6 L11.2,15 Z" fill="#e6dbe7"/>
<path d="M21.8,5.2 H26.2 L22.4,16.6 L20.4,15.2 L18.6,19.6 L17.8,16 Z" fill="#e6dbe7"/>
<path d="M12.4,24 L20.2,1.2 H24 L16,24 Z" fill="#ff6a2a"/>
</svg>
<div class="abs ul" style="left:867px;width:41px"></div><div class="abs ul2" style="left:908px;width:10px"></div>
<!-- T tablet -->
<svg class="abs" style="left:937px;top:1038px" width="34" height="32" viewBox="937 1038 34 32">
<rect x="939.2" y="1040" width="13.6" height="13.6" fill="#c8102e"/>
<path d="M941.6,1042.4 H950.4 V1045 H947.4 V1051.4 H944.6 V1045 H941.6 Z" fill="#fff"/>
<g transform="rotate(11 956 1060)">
<rect x="945.6" y="1053.2" width="21" height="13.6" rx="1.2" fill="#d8452c"/>
<rect x="946.8" y="1054.4" width="18.6" height="11.2" fill="#f2f2f2"/>
<rect x="948.4" y="1055.4" width="15.2" height="8.2" fill="#2a2d30"/>
</g>
</svg>
<div class="abs ul" style="left:929px;width:51px"></div>
<!-- NuView task button -->
<div class="abs" style="left:986px;top:1030px;width:61px;height:47px;background:#f3eef5"></div>
<svg class="abs" style="left:1001px;top:1040px" width="30" height="30" viewBox="0 0 30 30">
<defs><linearGradient id="nv" x1="0" y1="0" x2="0" y2="1"><stop offset="0" stop-color="#8e8e8e"/><stop offset=".55" stop-color="#ffffff"/><stop offset="1" stop-color="#ffffff"/></linearGradient>
<linearGradient id="lm" x1="0" y1="0" x2="0" y2="1"><stop offset="0" stop-color="#5a1010"/><stop offset=".3" stop-color="#d83a1e"/><stop offset=".5" stop-color="#f5d21a"/><stop offset=".75" stop-color="#c43c22"/><stop offset="1" stop-color="#6c1a12"/></linearGradient></defs>
<rect x=".5" y=".5" width="29" height="29" fill="url(#nv)" stroke="#8a8a8a"/>
<path d="M11.5,3.4 Q14.6,2 15.8,6 L20.6,18.6 Q21.6,20.6 23.6,18.8" fill="none" stroke="#4f8a2c" stroke-width="1.8"/>
<path d="M11.5,3.6 Q14.4,2.2 15.6,6.2 L16.6,9.4 L10.6,21" fill="none" stroke="url(#lm)" stroke-width="2.2"/>
<text x="15" y="27.4" text-anchor="middle" font-family="'Liberation Sans',sans-serif" font-weight="bold" font-size="9.8" fill="#2b4394" textLength="27.4" lengthAdjust="spacingAndGlyphs">NuView</text>
</svg>
<div class="abs ul" style="left:986px;width:61px"></div>
<!-- weather -->
<svg class="abs" style="left:1367px;top:1043px" width="30" height="23" viewBox="1367 1043 30 23">
<defs><linearGradient id="cl" x1="0" y1="0" x2="0" y2="1"><stop offset="0" stop-color="#dff2ff"/><stop offset="1" stop-color="#8fd0f7"/></linearGradient></defs>
<circle cx="1376.8" cy="1051" r="6.2" fill="#f9c338"/>
<g fill="url(#cl)" stroke="#c9e8fc" stroke-width=".5"><path d="M1374.6,1063.6 A4.9,4.9 0 0 1 1373.6,1054 A6.6,6.6 0 0 1 1386.2,1050.4 A5.6,5.6 0 0 1 1389.6,1063.6 Z"/></g>
</svg>
<div class="abs sans" style="left:1407px;top:1041.5px;font-size:19.5px;line-height:26px;white-space:nowrap;letter-spacing:-0.2px">29°C</div>
<div class="abs sans" style="left:1457.5px;top:1041.5px;font-size:18.5px;line-height:26px;white-space:nowrap">多云</div>
<!-- tray -->
<svg class="abs" style="left:1513px;top:1042px" width="172" height="26" viewBox="1513 1042 172 26">
<polyline points="1515.6,1058.8 1523.2,1051.2 1530.8,1058.8" fill="none" stroke="#111" stroke-width="1.5"/>
<path d="M1547.6,1060.4 Q1543.4,1060.2 1543.6,1056.6 Q1544,1053.6 1547.2,1053.4 Q1548.8,1048 1554,1048 Q1558.2,1048.4 1559.4,1052.2 Q1563,1052.6 1563,1056.4 Q1562.8,1060.2 1559,1060.4 Z" fill="#8a8a8a" stroke="#3c3c3c" stroke-width="1"/>
<path d="M1547.2,1053.6 L1559.2,1060.2 M1559.4,1052.4 L1549,1060.2" stroke="#d9d9d9" stroke-width=".8" fill="none"/>
<path d="M1573.4,1047.6 L1592.2,1045.2 V1056 M1573.4,1047.6 V1063 L1583,1064" fill="none" stroke="#1a1a1a" stroke-width="1.3"/>
<path d="M1578,1054.6 A4.2,4.2 0 0 1 1585.4,1052 M1585.8,1049.6 V1052.4 H1583 M1586,1056 A4.2,4.2 0 0 1 1578.6,1058.4 M1578.2,1060.8 V1058 H1581" fill="none" stroke="#1a1a1a" stroke-width="1.1"/>
<circle cx="1588.6" cy="1060.2" r="4.6" fill="#ff8c00"/>
<rect x="1608.4" y="1050.6" width="13.4" height="9.4" fill="#000" stroke="#000" stroke-width="1"/>
<rect x="1622.8" y="1052.6" width="1.6" height="4.6" fill="#000"/>
<path d="M1604,1048 V1050.6 M1606.6,1048 V1050.6 M1603,1050.6 H1607.6 V1053 Q1607.4,1055 1605.3,1055 Q1603.2,1055 1603,1053 Z M1605.3,1055 V1058.6 H1608" fill="none" stroke="#000" stroke-width="1"/>
<g fill="none" stroke="#1a1a1a" stroke-width="1.2"><path d="M1636,1062.6 A13.4,13.4 0 0 1 1649.4,1049.2" opacity=".55"/><path d="M1639.8,1062.6 A9.6,9.6 0 0 1 1649.4,1053"/><path d="M1643.6,1062.6 A5.8,5.8 0 0 1 1649.4,1056.8"/></g>
<circle cx="1648.4" cy="1061.6" r="1.5" fill="#1a1a1a"/>
<path d="M1663.4,1051.8 H1666.6 L1670.6,1047.4 V1062.8 L1666.6,1058.4 H1663.4 Z" fill="none" stroke="#1a1a1a" stroke-width="1.2"/>
<g fill="none" stroke="#1a1a1a" stroke-width="1.1"><path d="M1673.6,1052.4 Q1675.4,1055.1 1673.6,1057.8"/><path d="M1676.4,1049.8 Q1680,1055.1 1676.4,1060.4" opacity=".55"/><path d="M1679.4,1047.2 Q1684.6,1055.1 1679.4,1063" opacity=".3"/></g>
</svg>
<div class="abs sans" style="left:1690.5px;top:1040px;font-size:20.5px;line-height:28px;white-space:nowrap">英</div>
<div class="abs sans" style="left:1728px;top:1045px;width:20px;height:20px;box-sizing:border-box;border:1px solid #444;background:#fff;font-size:14.5px;line-height:18px;text-align:center">拼</div>
<div class="abs sans" style="left:1760px;top:1033.5px;width:95px;text-align:center;font-size:15.3px;line-height:20px;white-space:nowrap">17:21</div>
<div class="abs sans" style="left:1760px;top:1056.5px;width:95px;text-align:center;font-size:15.3px;line-height:20px;white-space:nowrap;letter-spacing:0.55px">2022/6/20</div>
<!-- notification -->
<svg class="abs" style="left:1866px;top:1042px" width="36" height="34" viewBox="1866 1042 36 34">
<path d="M1869,1045 H1889 V1061.4 H1877.6 L1874,1065 V1061.4 H1869 Z" fill="#000"/>
<g stroke="#e6dce8" stroke-width="1.2"><line x1="1872.6" y1="1049.6" x2="1885.4" y2="1049.6"/><line x1="1872.6" y1="1053.2" x2="1885.4" y2="1053.2"/><line x1="1872.6" y1="1056.8" x2="1885.4" y2="1056.8"/></g>
<circle cx="1888.4" cy="1064.4" r="9.6" fill="#e3dfe9" stroke="#6e6e6e" stroke-width="1"/>
<text x="1888.4" y="1070" text-anchor="middle" font-family="'Liberation Sans',sans-serif" font-size="14.5" font-weight="bold" fill="#111">3</text>
</svg>
<div class="abs" style="left:1915px;top:1030px;width:1px;height:50px;background:#9a9aa6"></div>
<!--TB1-->
</body>
</html>
